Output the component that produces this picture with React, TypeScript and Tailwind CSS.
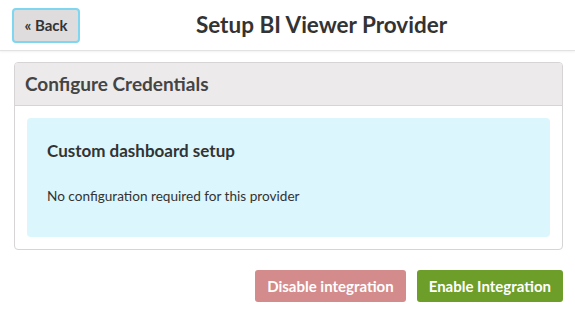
import React from "react";

const App: React.FC = () => {
  return (
    <div className="min-h-screen bg-white text-[#333] font-['Lato',sans-serif]">
      {/* Header bar */}
      <header className="h-[51px] flex items-center pl-3 pr-3 border-b border-[#e2e2e2] shadow-[0_1px_2px_rgba(0,0,0,0.06)]">
        <button className="h-[35px] w-[68px] rounded-[4px] bg-[#dedcdc] border-2 border-[#7fd6f0] text-[15px] font-bold text-[#333] flex items-center justify-center">
          « Back
        </button>
        <h1 className="flex-1 text-center text-[22.5px] font-bold">
          Setup BI Viewer Provider
        </h1>
      </header>

      <main className="pl-[14px] pr-[12px] pt-[11px]">
        {/* Credentials card */}
        <section className="border border-[#d6d4d4] rounded-[4px] overflow-hidden">
          <div className="h-[43px] bg-[#eceaea] border-b border-[#d6d4d4] flex items-center px-[10px]">
            <h2 className="text-[19px] font-bold text-[#444]">Configure Credentials</h2>
          </div>
          <div className="px-3 pt-3 pb-3">
            <div className="h-[119px] bg-[#dcf6fd] rounded-[4px] px-5 pt-[20px]">
              <h3 className="text-[17px] font-bold text-[#333]">Custom dashboard setup</h3>
              <p className="mt-[22px] text-[13.6px] text-[#333]">
                No configuration required for this provider
              </p>
            </div>
          </div>
        </section>

        {/* Actions */}
        <div className="flex justify-end gap-[11px] mt-[20px]">
          <button className="h-[32px] px-[12px] rounded-[3px] bg-[#d48b8b] text-white text-[15px] font-bold">
            Disable integration
          </button>
          <button className="h-[32px] px-[12px] rounded-[3px] bg-[#6e9e2a] text-white text-[15px] font-bold">
            Enable Integration
          </button>
        </div>
      </main>
    </div>
  );
};

export default App;
